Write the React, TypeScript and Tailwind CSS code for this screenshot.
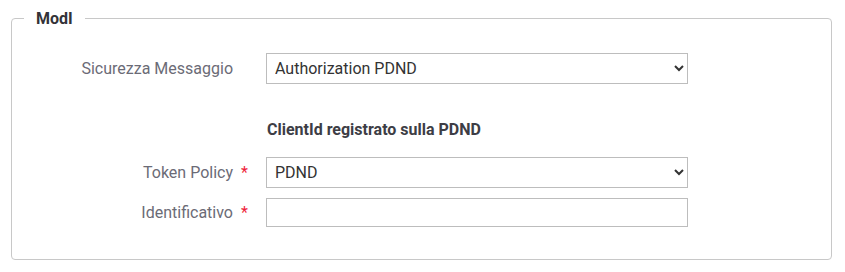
import React from "react";

const font = { fontFamily: "Roboto, 'Liberation Sans', sans-serif" };

interface RowProps {
  label: string;
  required?: boolean;
  children: React.ReactNode;
  className?: string;
}

const Row = ({ label, required, children, className }: RowProps) => (
  <div className={`flex items-center ${className ?? ""}`}>
    <div className="w-[221px] text-right text-[16px] text-[#6b6b76] leading-[19px]">{label}</div>
    <div className="w-[33px] pl-[8px] text-[16px] leading-[19px] text-[#ee1f3b]">{required ? "*" : ""}</div>
    <div className="w-[422px]">{children}</div>
  </div>
);

const App = () => {
  return (
    <div className="w-[845px] h-[272px] bg-white pt-[9px]" style={font}>
      <fieldset className="ml-[11px] w-[821px] border border-[#c8c8c8] rounded-[4px] pt-[25px] pb-[32px]">
        <legend className="ml-3 px-3 text-[16px] leading-[19px] font-bold text-[#333338]">ModI</legend>

        <Row label="Sicurezza Messaggio">
          <select
            defaultValue="pdnd"
            className="w-full h-[31px] border border-[#bdbdbd] bg-white px-[4px] text-[16px] text-[#333]"
          >
            <option value="pdnd">Authorization PDND</option>
          </select>
        </Row>

        <div className="flex mt-[36px]">
          <div className="w-[255px]" />
          <div className="text-[16px] leading-[19px] font-bold text-[#3d3d45]">ClientId registrato sulla PDND</div>
        </div>

        <Row label="Token Policy" required className="mt-[18px]">
          <select
            defaultValue="pdnd"
            className="w-full h-[31px] border border-[#bdbdbd] bg-white px-[4px] text-[16px] text-[#333]"
          >
            <option value="pdnd">PDND</option>
          </select>
        </Row>

        <Row label="Identificativo" required className="mt-[10px]">
          <input
            type="text"
            className="w-full h-[29px] border border-[#bdbdbd] bg-white px-[8px] text-[16px] text-[#333] outline-none"
          />
        </Row>
      </fieldset>
    </div>
  );
};

export default App;
